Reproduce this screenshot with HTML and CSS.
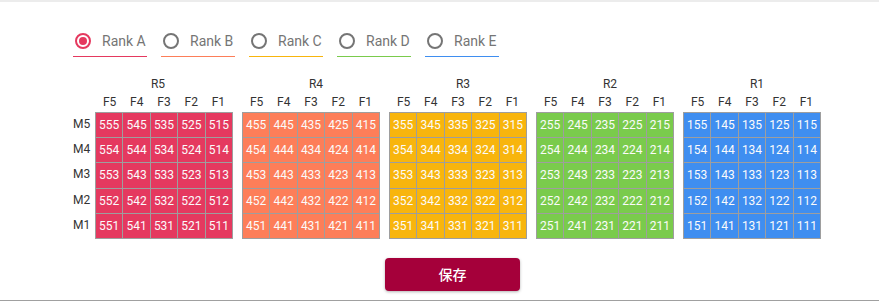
FILE: index.html
```html
<!DOCTYPE html>
<html lang="zh">
<head>
    <meta charset="UTF-8">
    <meta name="viewport" content="width=device-width, initial-scale=1.0">
    <title>Rank Grid</title>
    <link rel="stylesheet" href="styles.css">
</head>
<body>

<div class="page">
    <div class="tabs">
        <label class="tab tab-a"><span class="radio checked"></span>Rank A</label>
        <label class="tab tab-b"><span class="radio"></span>Rank B</label>
        <label class="tab tab-c"><span class="radio"></span>Rank C</label>
        <label class="tab tab-d"><span class="radio"></span>Rank D</label>
        <label class="tab tab-e"><span class="radio"></span>Rank E</label>
    </div>

    <div class="board" id="board">
        <div class="mcol">
            <div class="mlabel">M5</div>
            <div class="mlabel">M4</div>
            <div class="mlabel">M3</div>
            <div class="mlabel">M2</div>
            <div class="mlabel">M1</div>
        </div>
    </div>

    <div class="actions">
        <button class="save">保存</button>
    </div>
</div>

<script>
    const colors = ['', 'blue', 'green', 'yellow', 'orange', 'red'];
    const board = document.getElementById('board');

    // R5 down to R1, each a 5x5 block
    for (let r = 5; r >= 1; r--) {
        const group = document.createElement('div');
        group.className = 'group';

        let heads = '';
        for (let f = 5; f >= 1; f--) heads += `<span>F${f}</span>`;

        let cells = '';
        for (let m = 5; m >= 1; m--) {
            for (let f = 5; f >= 1; f--) {
                cells += `<div class="cell">${r}${f}${m}</div>`;
            }
        }

        group.innerHTML = `
            <div class="rlabel">R${r}</div>
            <div class="fhead">${heads}</div>
            <div class="grid ${colors[r]}">${cells}</div>
        `;
        board.appendChild(group);
    }
</script>

</body>
</html>
```

FILE: styles.css
```css
body {
    margin: 0;
    font-family: Roboto, "Noto Sans CJK SC", sans-serif;
    background-color: #fff;
}
.page {
    height: 298px;
    border-top: 2px solid #ececec;
    border-bottom: 1px solid #a0a0a0;
}
.tabs {
    display: flex;
    gap: 14px;
    padding: 29px 0 0 73px;
}
.tab {
    width: 74px;
    display: flex;
    align-items: center;
    height: 20px;
    padding-bottom: 5px;
    border-bottom: 1px solid;
    font-size: 14px;
    color: #757575;
}
.tab-a { border-color: #e5395f; }
.tab-b { border-color: #fd7e59; }
.tab-c { border-color: #f8b50d; }
.tab-d { border-color: #7acb4c; }
.tab-e { border-color: #3f8ef0; }
.radio {
    box-sizing: border-box;
    width: 16px;
    height: 16px;
    margin: 0 11px 0 2px;
    border: 2px solid #757575;
    border-radius: 50%;
    display: flex;
    align-items: center;
    justify-content: center;
}
.radio.checked {
    border-color: #e5395f;
}
.radio.checked::after {
    content: "";
    width: 8px;
    height: 8px;
    border-radius: 50%;
    background-color: #e5395f;
}
.board {
    display: flex;
    gap: 9px;
    margin: 18px 0 0 73px;
    font-size: 12px;
    color: #333;
}
.mcol {
    width: 22px;
    margin-top: 37px;
    margin-right: -9px;
}
.mlabel {
    height: 25.2px;
    line-height: 25.2px;
}
.group {
    width: 138px;
}
.rlabel {
    height: 18px;
    line-height: 18px;
    text-align: center;
    padding-left: 10px;
}
.mcol + .group .rlabel {
    padding-left: 0;
    padding-right: 12px;
}
.fhead {
    display: grid;
    grid-template-columns: repeat(5, 1fr);
    padding: 0 1px;
    height: 18px;
    line-height: 18px;
    margin-bottom: 1px;
    text-align: center;
}
.grid {
    display: grid;
    grid-template-columns: repeat(5, 1fr);
    grid-template-rows: repeat(5, 24.2px);
    gap: 1px;
    border: 1px solid #9e9e9e;
    background-color: #9e9e9e;
}
.cell {
    display: flex;
    align-items: center;
    justify-content: center;
    color: #fbfbfb;
    font-size: 12px;
}
.red .cell { background-color: #e5395f; }
.orange .cell { background-color: #fd7e59; }
.yellow .cell { background-color: #f8b50d; }
.green .cell { background-color: #7acb4c; }
.blue .cell { background-color: #3f8ef0; }
.actions {
    margin: 19px 0 0 385px;
}
.save {
    width: 135px;
    height: 33px;
    border: none;
    border-radius: 4px;
    background-color: #a5003a;
    color: #fff;
    font-family: "Noto Sans CJK SC", sans-serif;
    font-size: 14px;
    font-weight: 500;
    box-shadow: 0 1px 3px rgba(0, 0, 0, 0.3);
}
```
